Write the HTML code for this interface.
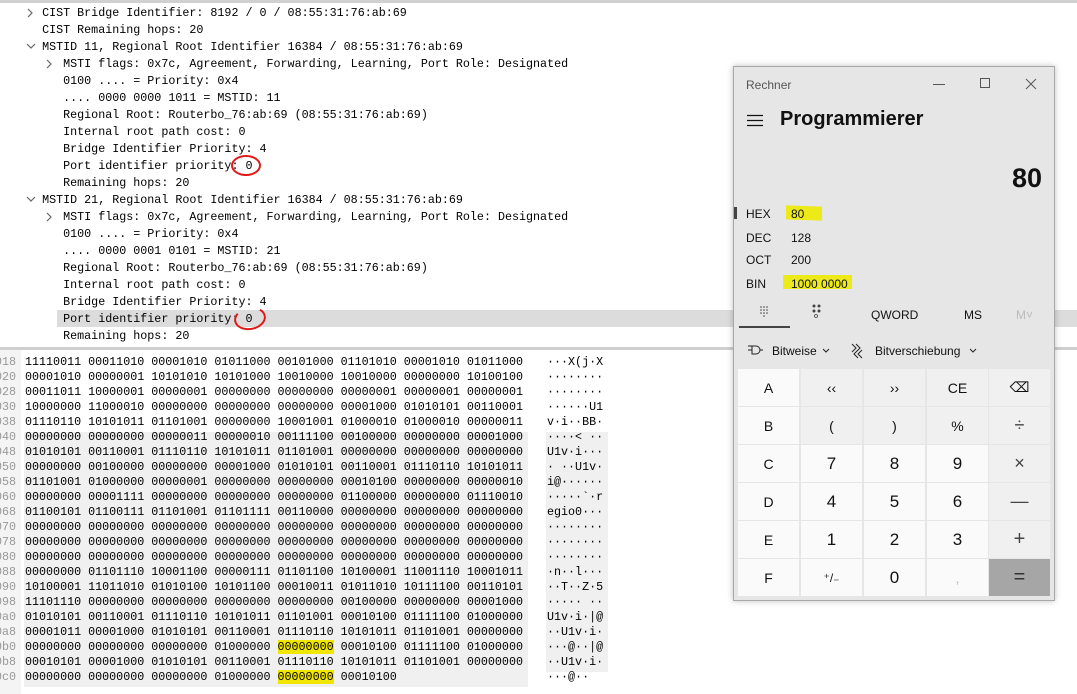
<!DOCTYPE html>
<html><head><meta charset="utf-8"><style>
*{margin:0;padding:0;box-sizing:border-box}
body{width:1077px;height:694px;overflow:hidden;background:#fff;position:relative;font-family:"Liberation Mono",monospace;color:#000}
.topline{position:absolute;left:0;top:0;width:1077px;height:3px;background:#d0d0d0}
.tree{position:absolute;left:0;top:5px;font-size:11.7px}
.tree div{height:17px;line-height:17px;white-space:pre;position:relative}
.hl{position:absolute;left:57px;top:310px;width:1020px;height:17px;background:#dcdcdc}
.sep{position:absolute;left:0;top:347px;width:1077px;height:3px;background:#cfcfcf}
.hexpane{position:absolute;left:0;top:350px;width:1077px;height:344px;background:#fff}
.off{position:absolute;left:0;top:0;width:21px;height:344px;background:#f4f4f4}
.shade{position:absolute;background:#f0f0f0}
pre{position:absolute;font-family:"Liberation Mono",monospace;font-size:11.7px;line-height:15px}
.ylw{background:#f0e600}
.circ{position:absolute;border:2.5px solid #e01818;border-radius:50%}
.calc{position:absolute;left:733px;top:66px;width:322px;height:535px;background:#e6e6e6;border:1px solid #a8a8a8;font-family:"Liberation Sans",sans-serif;box-shadow:0 0 6px rgba(0,0,0,.25)}
.calc .t{position:absolute;font-size:12px;color:#555}
.key{position:absolute;width:61px;height:37px;display:flex;align-items:center;justify-content:center;font-size:14px;color:#111}
.w{background:#fafafa}.g{background:#f0f0f0}
</style></head><body>
<div class="topline"></div>
<div class="hl"></div>
<div class="tree">
<div>      CIST Bridge Identifier: 8192 / 0 / 08:55:31:76:ab:69</div>
<div>      CIST Remaining hops: 20</div>
<div>      MSTID 11, Regional Root Identifier 16384 / 08:55:31:76:ab:69</div>
<div>         MSTI flags: 0x7c, Agreement, Forwarding, Learning, Port Role: Designated</div>
<div>         0100 .... = Priority: 0x4</div>
<div>         .... 0000 0000 1011 = MSTID: 11</div>
<div>         Regional Root: Routerbo_76:ab:69 (08:55:31:76:ab:69)</div>
<div>         Internal root path cost: 0</div>
<div>         Bridge Identifier Priority: 4</div>
<div>         Port identifier priority: 0</div>
<div>         Remaining hops: 20</div>
<div>      MSTID 21, Regional Root Identifier 16384 / 08:55:31:76:ab:69</div>
<div>         MSTI flags: 0x7c, Agreement, Forwarding, Learning, Port Role: Designated</div>
<div>         0100 .... = Priority: 0x4</div>
<div>         .... 0000 0001 0101 = MSTID: 21</div>
<div>         Regional Root: Routerbo_76:ab:69 (08:55:31:76:ab:69)</div>
<div>         Internal root path cost: 0</div>
<div>         Bridge Identifier Priority: 4</div>
<div>         Port identifier priority: 0</div>
<div>         Remaining hops: 20</div>
</div>
<svg style="position:absolute;left:0;top:0" width="80" height="350">
<g fill="none" stroke="#666" stroke-width="1.2">
<path d="M28 9l4 4-4 4"/>
<path d="M27 44l4 4 4-4"/>
<path d="M47 60l4 4-4 4"/>
<path d="M27 197l4 4 4-4"/>
<path d="M47 213l4 4-4 4"/>
</g></svg>
<div class="circ" style="left:231px;top:155px;width:30px;height:21px"></div>
<div class="circ" style="left:234px;top:307px;width:32px;height:23px;border-top-color:transparent;transform:rotate(-10deg)"></div>
<div class="sep"></div>
<div class="hexpane">
<div class="off"></div>
<div class="shade" style="left:24px;top:82px;width:504px;height:255px"></div>
<div class="shade" style="left:546px;top:82px;width:62px;height:240px"></div>
<pre style="left:-5px;top:5px;color:#999">018
020
028
030
038
040
048
050
058
060
068
070
078
080
088
090
098
0a0
0a8
0b0
0b8
0c0</pre>
<pre style="left:25px;top:5px">11110011 00011010 00001010 01011000 00101000 01101010 00001010 01011000
00001010 00000001 10101010 10101000 10010000 10010000 00000000 10100100
00011011 10000001 00000001 00000000 00000000 00000001 00000001 00000001
10000000 11000010 00000000 00000000 00000000 00001000 01010101 00110001
01110110 10101011 01101001 00000000 10001001 01000010 01000010 00000011
00000000 00000000 00000011 00000010 00111100 00100000 00000000 00001000
01010101 00110001 01110110 10101011 01101001 00000000 00000000 00000000
00000000 00100000 00000000 00001000 01010101 00110001 01110110 10101011
01101001 01000000 00000001 00000000 00000000 00010100 00000000 00000010
00000000 00001111 00000000 00000000 00000000 01100000 00000000 01110010
01100101 01100111 01101001 01101111 00110000 00000000 00000000 00000000
00000000 00000000 00000000 00000000 00000000 00000000 00000000 00000000
00000000 00000000 00000000 00000000 00000000 00000000 00000000 00000000
00000000 00000000 00000000 00000000 00000000 00000000 00000000 00000000
00000000 01101110 10001100 00000111 01101100 10100001 11001110 10001011
10100001 11011010 01010100 10101100 00010011 01011010 10111100 00110101
11101110 00000000 00000000 00000000 00000000 00100000 00000000 00001000
01010101 00110001 01110110 10101011 01101001 00010100 01111100 01000000
00001011 00001000 01010101 00110001 01110110 10101011 01101001 00000000
00000000 00000000 00000000 01000000 <span class="ylw">00000000</span> 00010100 01111100 01000000
00010101 00001000 01010101 00110001 01110110 10101011 01101001 00000000
00000000 00000000 00000000 01000000 <span class="ylw">00000000</span> 00010100</pre>
<pre style="left:547px;top:5px">···X(j·X
········
········
······U1
v·i··BB·
····&lt; ··
U1v·i···
· ··U1v·
i@······
·····`·r
egio0···
········
········
········
·n··l···
··T··Z·5
····· ··
U1v·i·|@
··U1v·i·
···@··|@
··U1v·i·
···@··</pre>
</div>

<div class="calc">
<div class="t" style="left:12px;top:11px">Rechner</div>
<svg style="position:absolute;left:0;top:0" width="322" height="60"><g stroke="#555" fill="none" stroke-width="1"><path d="M199 17.5h12"/><rect x="246.5" y="11.5" width="9" height="9"/><path d="M292 12l10 10M302 12l-10 10"/></g>
<g stroke="#111" stroke-width="1.3"><path d="M13 48.5h16M13 53.5h16M13 58.5h16"/></g></svg>
<div style="position:absolute;left:46px;top:41px;font-size:20px;font-weight:bold;color:#111">Programmierer</div>
<div style="position:absolute;right:12px;top:96px;font-size:27px;font-weight:bold;color:#111">80</div>
<div style="position:absolute;left:0;top:140px;width:3px;height:12px;background:#444"></div>
<div style="position:absolute;left:52px;top:139px;width:36px;height:14px;background:#ecea18;transform:skewY(2deg)"></div>
<div style="position:absolute;left:49px;top:208px;width:69px;height:14px;background:#ecea18"></div>
<div class="t" style="left:12px;top:140px;color:#111">HEX</div>
<div class="t" style="left:57px;top:140px;color:#111">80</div>
<div class="t" style="left:12px;top:164px;color:#111">DEC</div>
<div class="t" style="left:57px;top:164px;color:#111">128</div>
<div class="t" style="left:12px;top:186px;color:#111">OCT</div>
<div class="t" style="left:57px;top:186px;color:#111">200</div>
<div class="t" style="left:12px;top:210px;color:#111">BIN</div>
<div class="t" style="left:57px;top:210px;color:#111">1000 0000</div>
<svg style="position:absolute;left:0;top:230px" width="322" height="70"><g fill="#444"><circle cx="27" cy="10" r=".8"/><circle cx="30" cy="10" r=".8"/><circle cx="33" cy="10" r=".8"/><circle cx="27" cy="13" r=".8"/><circle cx="30" cy="13" r=".8"/><circle cx="33" cy="13" r=".8"/><circle cx="27" cy="16" r=".8"/><circle cx="30" cy="16" r=".8"/><circle cx="33" cy="16" r=".8"/><circle cx="30" cy="19" r=".8"/>
<circle cx="80" cy="9" r="1.5"/><circle cx="85" cy="9" r="1.5"/><circle cx="80" cy="14" r="1.5"/><circle cx="85" cy="14" r="1.5"/><circle cx="82" cy="19" r="1.5" fill="none" stroke="#444" stroke-width=".8"/></g>
<rect x="5" y="29" width="51" height="2" fill="#444"/>
<g stroke="#222" fill="none" stroke-width="1"><path d="M14 53h4M14 49h4v8h4a4 4 0 0 0 0-8z M26 53h3"/><path d="M118 47l4 4-4 4M122 47l4 4-4 4M124 53l-4 4 4 4M128 53l-4 4 4 4"/><path d="M89 52l3 3 3-3M236 52l3 3 3-3"/></g></svg>
<div class="t" style="left:137px;top:241px;color:#111;font-size:12px">QWORD</div>
<div class="t" style="left:230px;top:241px;color:#111;font-size:12px">MS</div>
<div class="t" style="left:282px;top:241px;color:#bbb;font-size:12px">M˅</div>
<div class="t" style="left:38px;top:277px;color:#111;font-size:12px">Bitweise</div>
<div class="t" style="left:141px;top:277px;color:#111;font-size:12px">Bitverschiebung</div>

<div class="key w" style="left:4px;top:302px">A</div>
<div class="key g" style="left:67px;top:302px">&lsaquo;&lsaquo;</div>
<div class="key g" style="left:130px;top:302px">&rsaquo;&rsaquo;</div>
<div class="key g" style="left:193px;top:302px">CE</div>
<div class="key g" style="left:255px;top:302px">⌫</div>
<div class="key w" style="left:4px;top:340px">B</div>
<div class="key g" style="left:67px;top:340px">(</div>
<div class="key g" style="left:130px;top:340px">)</div>
<div class="key g" style="left:193px;top:340px">%</div>
<div class="key g" style="left:255px;top:340px;font-size:18px;color:#444">÷</div>
<div class="key w" style="left:4px;top:378px">C</div>
<div class="key w" style="left:67px;top:378px;font-size:17px">7</div>
<div class="key w" style="left:130px;top:378px;font-size:17px">8</div>
<div class="key w" style="left:193px;top:378px;font-size:17px">9</div>
<div class="key g" style="left:255px;top:378px;font-size:18px;color:#444">×</div>
<div class="key w" style="left:4px;top:416px">D</div>
<div class="key w" style="left:67px;top:416px;font-size:17px">4</div>
<div class="key w" style="left:130px;top:416px;font-size:17px">5</div>
<div class="key w" style="left:193px;top:416px;font-size:17px">6</div>
<div class="key g" style="left:255px;top:416px;font-size:18px;color:#444">—</div>
<div class="key w" style="left:4px;top:454px">E</div>
<div class="key w" style="left:67px;top:454px;font-size:17px">1</div>
<div class="key w" style="left:130px;top:454px;font-size:17px">2</div>
<div class="key w" style="left:193px;top:454px;font-size:17px">3</div>
<div class="key g" style="left:255px;top:454px;font-size:20px;color:#444">+</div>
<div class="key w" style="left:4px;top:492px">F</div>
<div class="key w" style="left:67px;top:492px;font-size:12px">⁺/₋</div>
<div class="key w" style="left:130px;top:492px;font-size:17px">0</div>
<div class="key w" style="left:193px;top:492px;color:#bbb">,</div>
<div class="key" style="left:255px;top:492px;background:#a6a6a6;font-size:20px;color:#333">=</div>
</div>
</body></html>
